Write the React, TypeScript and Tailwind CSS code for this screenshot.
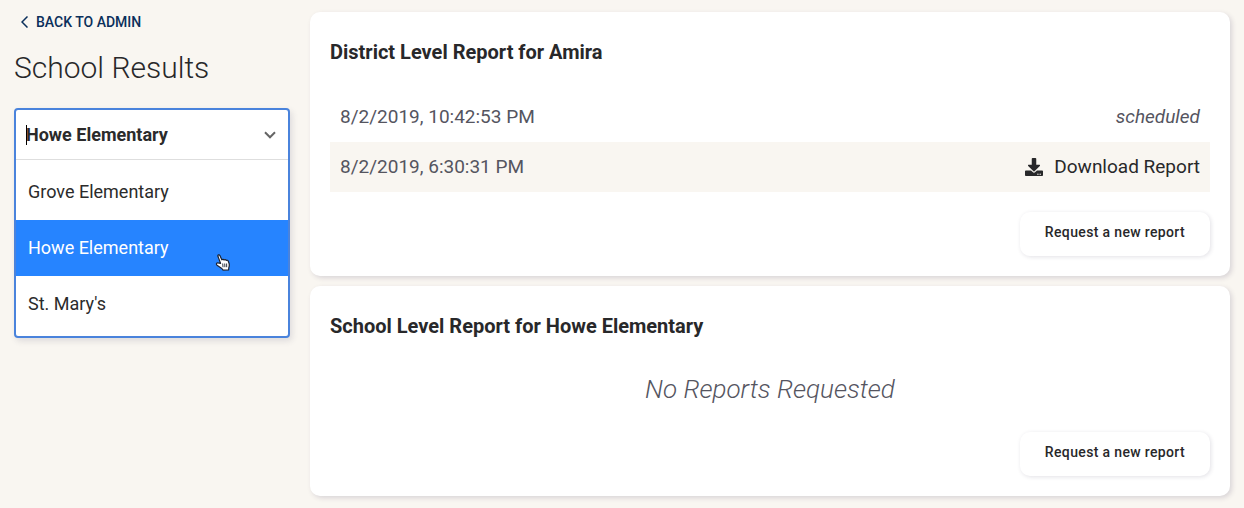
import type { ReactNode } from "react";
import { FaDownload } from "react-icons/fa";

const schools = ["Grove Elementary", "Howe Elementary", "St. Mary's"];
const selected = "Howe Elementary";

function BackLink() {
  return (
    <a
      href="#admin"
      className="ml-[7px] flex h-5 items-center gap-2 text-sm font-medium text-[#0b2f5b]"
    >
      <svg width="7" height="12" viewBox="0 0 7 12" fill="none" aria-hidden="true">
        <path d="M6.5 0.5 1 6l5.5 5.5" stroke="currentColor" strokeWidth="1.5" />
      </svg>
      BACK TO ADMIN
    </a>
  );
}

function HandCursor() {
  return (
    <svg
      className="pointer-events-none absolute right-[57px] bottom-1"
      width="16"
      height="18"
      viewBox="0 0 16 18"
      aria-hidden="true"
    >
      <path
        d="M5.6 9.4 4.2 5.6 2.9 2.3C2.5.9 4.3.3 4.9 1.6L6.8 5.800c.6-.8 1.900-.6 2.200.2.6-.7 1.900-.5 2.200.4.7-.5 1.700-.2 2 .6l.9 2.500c.4 1.500.2 2.800-.3 4.200l-.2 2.200-5.500.3-1.300-1.700L2 11.200C.9 10 1.600 8.600 3 8.900c1 .1 1.800.3 2.600.5z"
        fill="#fff"
        stroke="#1c2230"
        strokeWidth="1.2"
        strokeLinejoin="round"
      />
      <path
        d="M7.700 9.500l.3 3.700M9.700 9.500l.2 3.700M11.600 9.500l.1 3.700"
        stroke="#1c2230"
        strokeWidth="0.9"
      />
    </svg>
  );
}

function SchoolSelect() {
  return (
    <div className="mt-5 overflow-hidden rounded-[4px] border-2 border-[#4a83dc] bg-white text-lg text-[#2b2b2b] shadow-[2px_3px_6px_rgba(60,60,90,0.14)]">
      <div className="relative flex h-[50px] items-center border-b border-[#dedede] px-[10px]">
        <input
          type="text"
          role="combobox"
          aria-label="School"
          aria-expanded="true"
          aria-controls="school-options"
          defaultValue={selected}
          className="w-full min-w-0 bg-transparent font-bold outline-none"
        />
        <span className="absolute left-[10px] h-5 w-px bg-black" />
        <svg
          className="mr-[2px] shrink-0"
          width="12"
          height="8"
          viewBox="0 0 12 8"
          fill="none"
          aria-hidden="true"
        >
          <path d="M1 1.3l5 5 5-5" stroke="#666" strokeWidth="2" />
        </svg>
      </div>
      <ul id="school-options" role="listbox" aria-label="Schools" className="py-1">
        {schools.map((school) => (
          <li
            key={school}
            role="option"
            aria-selected={school === selected}
            className="relative flex h-14 cursor-pointer items-center px-3 aria-selected:bg-[#2684ff] aria-selected:text-white"
          >
            {school}
            {school === selected && <HandCursor />}
          </li>
        ))}
      </ul>
    </div>
  );
}

function ReportCard({ title, children }: { title: string; children: ReactNode }) {
  return (
    <section className="flex flex-col gap-5 rounded-[10px] bg-white p-5 shadow-[2px_2px_5px_rgba(50,40,80,0.16)]">
      <h2 className="text-xl leading-10 font-bold text-[#28282a]">{title}</h2>
      {children}
      <button
        type="button"
        className="h-11 self-end rounded-[10px] bg-white px-[25px] pb-1 text-sm font-medium tracking-wide text-[#28282a] shadow-[1px_1px_4px_rgba(50,40,80,0.14)]"
      >
        Request a new report
      </button>
    </section>
  );
}

export default function App() {
  return (
    <div className="flex min-h-screen gap-5 bg-[#f9f6f1] px-[14px] py-3 font-['Roboto',sans-serif]">
      <aside className="w-[276px] shrink-0">
        <BackLink />
        <h1 className="mt-4 text-[30px] leading-10 font-light text-[#28282a]">
          School Results
        </h1>
        <SchoolSelect />
      </aside>
      <main className="flex min-w-0 flex-1 flex-col gap-[10px]">
        <ReportCard title="District Level Report for Amira">
          <table className="w-full text-[19px] text-[#55555f]">
            <tbody>
              <tr className="h-[50px]">
                <td className="px-[10px]">8/2/2019, 10:42:53 PM</td>
                <td className="px-[10px] text-right italic">scheduled</td>
              </tr>
              <tr className="h-[50px] bg-[#f9f6f1]">
                <td className="px-[10px]">8/2/2019, 6:30:31 PM</td>
                <td className="px-[10px] text-right">
                  <a
                    href="#download"
                    className="inline-flex items-center gap-[11px] align-middle text-[#28282a]"
                  >
                    <FaDownload className="size-[18px]" />
                    Download Report
                  </a>
                </td>
              </tr>
            </tbody>
          </table>
        </ReportCard>
        <ReportCard title="School Level Report for Howe Elementary">
          <p className="text-center text-[26px] leading-[46px] font-light text-[#55555f] italic">
            No Reports Requested
          </p>
        </ReportCard>
      </main>
    </div>
  );
}
